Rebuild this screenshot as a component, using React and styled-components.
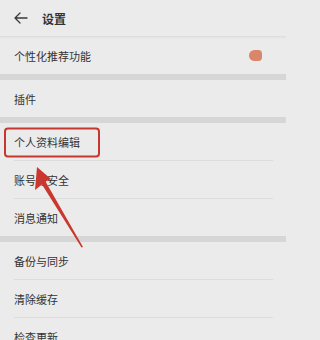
import React from "react";
import styled, { createGlobalStyle } from "styled-components";

const Global = createGlobalStyle`
  html, body { margin: 0; padding: 0; background: #ebebeb; }
  body { font-family: "Noto Sans CJK SC", "Noto Sans", sans-serif; }
`;

const Page = styled.div`
  position: relative;
  width: 286px;
  height: 340px;
  overflow: hidden;
  background: #ebebeb;
  color: #2e2e2e;
`;

const Header = styled.div`
  height: 36px;
  display: flex;
  align-items: center;
  padding-left: 14px;
  border-bottom: 1px solid #dedede;
  box-shadow: 0 1px 2px rgba(0, 0, 0, 0.04);
`;

const Title = styled.div`
  margin-left: 14px;
  font-size: 12px;
  font-weight: 700;
  color: #333;
`;

const Group = styled.div`
  display: flex;
  flex-direction: column;
`;

const Band = styled.div`
  height: 6px;
  background: #d6d6d6;
`;

const Row = styled.div`
  height: 37px;
  display: flex;
  align-items: center;
  justify-content: space-between;
  padding: 0 24px 0 14px;
  font-size: 11px;
  color: #333;
`;

const Divider = styled.div`
  height: 1px;
  margin: 0 13px 0 14px;
  background: #dcdcdc;
`;

const Toggle = styled.div`
  width: 13px;
  height: 11px;
  border-radius: 6px 4px 4px 6px;
  background: #d9866a;
`;

const Overlay = styled.svg`
  position: absolute;
  left: 0;
  top: 0;
  pointer-events: none;
`;

const BackIcon = () => (
  <svg width="14" height="12" viewBox="0 0 14 12">
    <path d="M1 6 H13 M6 1 L1 6 L6 11" fill="none" stroke="#3a3a3a" strokeWidth="1.3" strokeLinecap="round" strokeLinejoin="round" />
  </svg>
);

const groups = [
  [{ label: "个性化推荐功能", toggle: true }],
  [{ label: "插件" }],
  [{ label: "个人资料编辑" }, { label: "账号与安全" }, { label: "消息通知" }],
  [{ label: "备份与同步" }, { label: "清除缓存" }, { label: "检查更新" }],
];

export default function App() {
  return (
    <Page>
      <Global />
      <Header>
        <BackIcon />
        <Title>设置</Title>
      </Header>
      {groups.map((g, gi) => (
        <React.Fragment key={gi}>
          {gi > 0 && <Band />}
          <Group>
            {g.map((item, i) => (
              <React.Fragment key={item.label}>
                {i > 0 && <Divider />}
                <Row>
                  <span>{item.label}</span>
                  {item.toggle && <Toggle />}
                </Row>
              </React.Fragment>
            ))}
          </Group>
        </React.Fragment>
      ))}
      <Overlay width="286" height="340" viewBox="0 0 286 340">
        <rect x="5" y="128.5" width="94" height="28" rx="3" fill="none" stroke="#c5372f" strokeWidth="2" />
        <polygon points="37,167 51,179 45.5,181.5 83,247 81.5,247.5 42,184.5 35,190" fill="#c9372f" />
      </Overlay>
    </Page>
  );
}
